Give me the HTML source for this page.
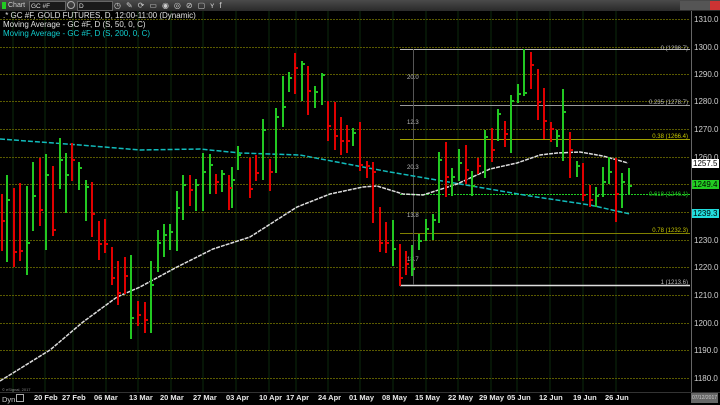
<!DOCTYPE html>
<html><head><meta charset="utf-8"><style>
html,body{margin:0;padding:0;background:#000;width:720px;height:405px;overflow:hidden;font-family:"Liberation Sans",sans-serif}
#tb{position:absolute;left:0;top:0;width:720px;height:11px;background:linear-gradient(#4a4a4a,#2a2a2a);}
.t{position:absolute;font-size:9px;white-space:nowrap;line-height:9px}
.ax{position:absolute;left:694px;font-size:8px;color:#d0d0d0;line-height:8px}
.tag{position:absolute;left:692px;width:26px;height:9px;font-size:8px;line-height:9px;color:#000;padding-left:1px;white-space:nowrap;overflow:hidden}
.d{position:absolute;top:394px;font-size:7.5px;font-weight:bold;color:#e8e8e8;line-height:8px}
</style></head><body>
<div id="tb">
<div style="position:absolute;left:2px;top:2px;width:4px;height:7px;background:#2c2"></div>
<div class="t" style="left:8px;top:1px;font-size:7px;color:#ccc">Chart</div>
<div style="position:absolute;left:29px;top:1px;width:35px;height:8px;background:#1a1a1a;border:1px solid #666"></div>
<div class="t" style="left:31px;top:2px;font-size:6.5px;color:#ddd">GC #F</div>
<div style="position:absolute;left:67px;top:1px;width:8px;height:8px;border-radius:50%;border:1px solid #aaa;box-sizing:border-box"></div>
<div style="position:absolute;left:77px;top:1px;width:34px;height:8px;background:#1a1a1a;border:1px solid #666"></div>
<div class="t" style="left:79px;top:2px;font-size:6.5px;color:#ddd">D</div>
<div style="position:absolute;left:114px;top:1px;width:90px;height:9px;color:#ccc;font-size:8px;line-height:9px;letter-spacing:5px">◷✎⟳▭◉◎⊘▢ʏf</div>
<div style="position:absolute;left:680px;top:1px;width:40px;height:9px;background:#555"></div>
<div style="position:absolute;left:710px;top:1px;width:10px;height:9px;background:#c33"></div>
</div>
<svg style="position:absolute;left:0;top:0" width="720" height="405">
<g stroke="#0d2a0d" stroke-width="1">
<path d="M13 11V392M45 11V392M73 11V392M106 11V392M138 11V392M171 11V392M203 11V392M236 11V392M269 11V392M296 11V392M328 11V392M360 11V392M393 11V392M426 11V392M458 11V392M491 11V392M517 11V392M550 11V392M583 11V392M616 11V392"/>
</g>
<g stroke="#5a5a00" stroke-width="1" stroke-dasharray="2,1">
<path d="M0 19.5H690M0 47.5H690M0 74.5H690M0 101.5H690M0 129.5H690M0 157.5H690M0 184.5H690M0 212.5H690M0 240.5H690M0 267.5H690M0 295.5H690M0 323.5H690M0 350.5H690M0 378.5H690"/>
</g>
<line x1="691.5" y1="11" x2="691.5" y2="392" stroke="#666"/>
<g stroke-width="1">
<path d="M400 49.5H690" stroke="#bbb"/>
<path d="M400 105.5H690" stroke="#999"/>
<path d="M400 139.5H690" stroke="#a0a000"/>
<path d="M400 194.5H690" stroke="#2c2" stroke-dasharray="2,1"/>
<path d="M400 233.5H690" stroke="#808000"/>
<path d="M400 285.5H690" stroke="#ddd" stroke-width="1.5"/>
<path d="M413.5 49V285" stroke="#555"/>
</g>
<g font-size="6" fill="#bbb" font-family="Liberation Sans">
<text x="407" y="79">20.0</text><text x="407" y="124">12.3</text><text x="407" y="169">20.3</text><text x="407" y="217">13.8</text><text x="407" y="261">18.7</text>
<text x="688" y="50" text-anchor="end">0 (1298.7)</text>
<text x="688" y="104" text-anchor="end">0.235 (1278.7)</text>
<text x="688" y="138" text-anchor="end" fill="#c8c800">0.38 (1266.4)</text>
<text x="688" y="196" text-anchor="end" fill="#2c2">0.618 (1246.1)</text>
<text x="688" y="232" text-anchor="end" fill="#c8c800">0.78 (1232.3)</text>
<text x="688" y="284" text-anchor="end">1 (1213.6)</text>
</g>
<polyline fill="none" stroke="#1bb" stroke-width="1.5" stroke-dasharray="5,2" points="0,139 80,145 140,150 200,149 240,153 300,155 363,167 390,172 460,184 530,196 590,205 630,214"/>
<polyline fill="none" stroke="#ddd" stroke-width="1.5" stroke-dasharray="4,1" points="0,381 50,350 83,322 117,297 140,287 177,267 213,249 250,237 297,207 330,194 363,187 377,186 403,194 423,195 457,184 490,169 517,163 540,155 557,153 580,152 603,156 628,163"/>
<path fill="none" stroke="#22c822" stroke-width="2" d="M7 175V262M7 200H10M27 186V275M27 243H30M33 162V231M33 196H36M46 154V250M46 175H49M60 138V189M60 160H63M66 153V213M66 175H69M79 162V190M79 168H82M86 180V221M86 187H89M131 255V339M131 318H134M151 261V333M151 285H154M158 230V272M158 243H161M164 224V257M164 235H167M170 224V250M170 232H173M177 191V251M177 208H180M183 175V220M183 185H186M196 179V211M196 185H199M203 153V211M203 172H206M210 154V194M210 165H213M222 170V192M222 174H225M232 167V208M232 180H235M238 146V170M238 155H241M263 119V180M263 130H266M276 108V173M276 117H279M283 76V127M283 107H286M289 72V92M289 78H292M302 61V101M302 64H305M315 86V108M315 92H318M322 73V105M322 75H325M353 128V146M353 133H356M393 220V266M393 249H396M412 245V276M412 269H415M419 234V250M419 241H422M426 219V241M426 229H429M433 214V240M433 220H436M439 152V223M439 160H442M452 168V196M452 177H455M459 149V181M459 163H462M472 171V196M472 186H475M485 130V178M485 137H488M498 109V141M498 114H501M511 95V153M511 101H514M518 84V103M518 94H521M524 49V96M524 93H527M557 130V147M557 136H560M563 89V161M563 112H566M577 161V177M577 166H580M596 187V207M596 196H599M603 167V197M603 182H606M609 157V184M609 172H612M622 173V208M622 182H625M629 168V195M629 186H632"/>
<path fill="none" stroke="#e00000" stroke-width="2" d="M2 194V251M2 221H5M14 188V267M14 252H17M20 183V261M20 251H23M40 158V226M40 210H43M53 166V236M53 230H56M72 143V181M72 160H75M92 182V237M92 214H95M99 221V260M99 244H102M105 219V253M105 244H108M112 247V285M112 278H115M118 261V305M118 293H121M125 257V294M125 276H128M138 301V326M138 315H141M145 302V333M145 320H148M190 175V206M190 190H193M216 174V194M216 182H219M229 175V210M229 188H232M250 158V198M250 189H253M256 155V181M256 173H259M270 159V191M270 172H273M295 53V94M295 68H298M308 66V115M308 91H311M328 101V141M328 126H331M335 102V150M335 136H338M341 117V155M341 141H344M347 125V153M347 141H350M360 122V171M360 165H363M367 161V178M367 166H370M373 162V223M373 172H376M380 207V252M380 243H383M386 222V253M386 243H389M400 244V286M400 278H403M406 251V275M406 264H409M446 142V197M446 177H449M466 145V184M466 170H469M478 158V174M478 166H481M492 128V162M492 150H495M505 121V147M505 134H508M531 52V89M531 65H534M538 69V120M538 102H541M544 88V139M544 121H547M551 122V142M551 129H554M570 132V178M570 150H573M583 163V201M583 195H586M590 185V207M590 200H593M616 158V222M616 194H619"/>
<rect x="0" y="392" width="720" height="13" fill="#000"/>
<line x1="0" y1="392.5" x2="720" y2="392.5" stroke="#333"/>
</svg>
<div class="t" style="left:3px;top:11px;color:#e0e0e0;font-size:8px">.* GC #F, GOLD FUTURES, D, 12:00-11:00 (Dynamic)</div>
<div class="t" style="left:3px;top:20px;color:#e0e0e0;font-size:8px">Moving Average - GC #F, D (S, 50, 0, C)</div>
<div class="t" style="left:3px;top:29px;color:#1cc;font-size:8px">Moving Average - GC #F, D (S, 200, 0, C)</div>
<div class="ax" style="top:16px">1310.0</div>
<div class="ax" style="top:44px">1300.0</div>
<div class="ax" style="top:71px">1290.0</div>
<div class="ax" style="top:98px">1280.0</div>
<div class="ax" style="top:126px">1270.0</div>
<div class="ax" style="top:154px">1260.0</div>
<div class="ax" style="top:237px">1230.0</div>
<div class="ax" style="top:264px">1220.0</div>
<div class="ax" style="top:292px">1210.0</div>
<div class="ax" style="top:320px">1200.0</div>
<div class="ax" style="top:347px">1190.0</div>
<div class="ax" style="top:375px">1180.0</div>
<div class="tag" style="top:159px;background:#fff">1257.5</div>
<div class="tag" style="top:180px;background:#2c2">1249.4</div>
<div class="tag" style="top:209px;background:#2dd">1239.3</div>
<div class="t" style="left:2px;top:385px;font-size:4px;color:#888">© eSignal, 2017</div>
<div class="d" style="left:2px;color:#ccc;font-weight:normal">Dyn<span style="display:inline-block;width:6px;height:6px;border:1px solid #aaa;margin-left:1px"></span></div>
<div class="d" style="left:34px">20 Feb</div><div class="d" style="left:62px">27 Feb</div><div class="d" style="left:94px">06 Mar</div><div class="d" style="left:129px">13 Mar</div><div class="d" style="left:160px">20 Mar</div><div class="d" style="left:193px">27 Mar</div><div class="d" style="left:226px">03 Apr</div><div class="d" style="left:259px">10 Apr</div><div class="d" style="left:286px">17 Apr</div><div class="d" style="left:318px">24 Apr</div><div class="d" style="left:349px">01 May</div><div class="d" style="left:382px">08 May</div><div class="d" style="left:415px">15 May</div><div class="d" style="left:448px">22 May</div><div class="d" style="left:479px">29 May</div><div class="d" style="left:507px">05 Jun</div><div class="d" style="left:539px">12 Jun</div><div class="d" style="left:573px">19 Jun</div><div class="d" style="left:605px">26 Jun</div>
<div style="position:absolute;left:691px;top:393px;width:27px;height:10px;background:#666;color:#ccc;font-size:5px;line-height:10px;text-align:center">07/12/2017</div>
</body></html>
